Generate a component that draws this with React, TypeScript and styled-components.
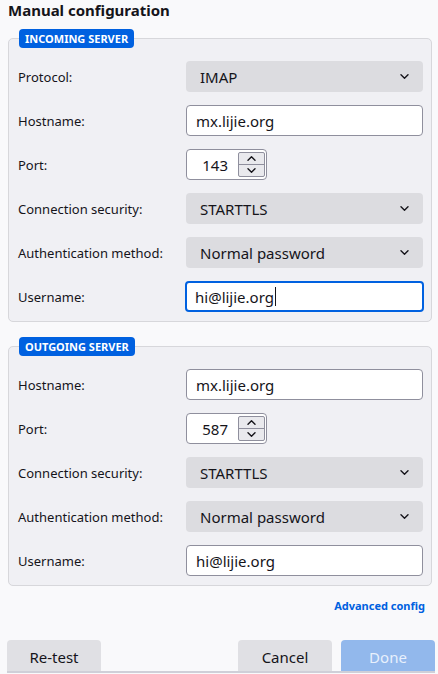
import React from "react";
import styled, { createGlobalStyle } from "styled-components";

const Global = createGlobalStyle`
  html, body { margin: 0; padding: 0; background: #f9f9fb; }
  body { font-family: "Noto Sans", "Liberation Sans", sans-serif; color: #15141a; }
  * { box-sizing: border-box; }
`;

const Page = styled.div`
  width: 438px;
  height: 674px;
  overflow: hidden;
  display: flex;
  flex-direction: column;
  padding: 0 6px 0 8px;
`;

const Title = styled.h1`
  margin: 0;
  font-size: 15px;
  line-height: 20px;
  font-weight: 700;
  height: 20px;
  flex-shrink: 0;
`;

const Fieldset = styled.fieldset<{ $top: number }>`
  margin: ${(p) => p.$top}px 0 0 0;
  border: 1px solid #d7d7db;
  border-radius: 5px;
  background: #f0f0f4;
  padding: 13px 8px 9px 9px;
  min-width: 0;
  flex-shrink: 0;
`;

const Legend = styled.legend`
  padding: 0 6px;
  height: 19px;
  line-height: 19px;
  background: #0061e0;
  color: #fff;
  font-size: 11px;
  font-weight: 700;
  border-radius: 4px;
  margin-left: 1px;
`;

const Rows = styled.div`
  display: grid;
  grid-template-columns: 168px 1fr;
  row-gap: 13px;
  align-items: center;
`;

const Label = styled.label`
  font-size: 13px;
  line-height: 18px;
  color: #15141a;
`;

const SelectBox = styled.div`
  height: 31px;
  border-radius: 4px;
  background: #dcdce0;
  display: flex;
  align-items: center;
  justify-content: space-between;
  padding: 0 14px 0 14px;
  font-size: 15px;
`;

const Chevron = ({ up = false }: { up?: boolean }) => (
  <svg width="9" height="5" viewBox="0 0 9 5" style={{ transform: up ? "rotate(180deg)" : undefined }}>
    <path d="M1 0.8 L4.5 4.2 L8 0.8" fill="none" stroke="#15141a" strokeWidth="1.4" strokeLinecap="round" strokeLinejoin="round" />
  </svg>
);

const TextBox = styled.div<{ $focus?: boolean }>`
  height: 31px;
  border-radius: 4px;
  background: #fff;
  border: ${(p) => (p.$focus ? "2px solid #0061e0" : "1px solid #8f8f9d")};
  display: flex;
  align-items: center;
  padding-left: ${(p) => (p.$focus ? "8px" : "9px")};
  font-size: 15px;
  margin-left: ${(p) => (p.$focus ? "-1px" : "0")};
  margin-right: ${(p) => (p.$focus ? "-1px" : "0")};
`;

const Caret = styled.span`
  display: inline-block;
  width: 1px;
  height: 19px;
  background: #15141a;
  margin-left: 1px;
`;

const PortBox = styled.div`
  width: 81px;
  height: 31px;
  border-radius: 4px;
  background: #fff;
  border: 1px solid #8f8f9d;
  display: flex;
  align-items: center;
  padding: 2px 1px 2px 0;
`;

const PortValue = styled.span`
  flex: 1;
  text-align: right;
  padding-right: 10px;
  font-size: 15px;
`;

const Spinner = styled.div`
  width: 27px;
  height: 100%;
  display: flex;
  flex-direction: column;
  border: 1px solid #8f8f9d;
  border-radius: 2px;
  background: #e9e9ed;
`;

const SpinBtn = styled.div<{ $top?: boolean }>`
  flex: 1;
  display: flex;
  align-items: center;
  justify-content: center;
  border-bottom: ${(p) => (p.$top ? "1px solid #8f8f9d" : "none")};
`;

const LinkRow = styled.div`
  display: flex;
  justify-content: flex-end;
  margin-top: 12px;
  padding-right: 7px;
  flex-shrink: 0;
`;

const Link = styled.a`
  color: #0061e0;
  font-size: 11px;
  font-weight: 700;
  line-height: 16px;
  text-decoration: none;
`;

const Footer = styled.div`
  margin-top: 26px;
  display: flex;
  align-items: flex-end;
  gap: 9px;
  margin-left: -1px;
  margin-right: -3px;
  border-bottom: 2px solid #cfcfd8;
  flex-shrink: 0;
`;

const Btn = styled.button<{ $primary?: boolean }>`
  width: 94px;
  height: 31px;
  border: none;
  border-radius: 4px 4px 0 0;
  font-family: inherit;
  font-size: 15px;
  line-height: 20px;
  padding: 2px 0 0 0;
  background: ${(p) => (p.$primary ? "#92b8ec" : "#e0e0e4")};
  color: ${(p) => (p.$primary ? "#e8f0fc" : "#15141a")};
`;

const Spacer = styled.div`
  flex: 1;
`;

type Row =
  | { kind: "select"; label: string; value: string }
  | { kind: "text"; label: string; value: string; focus?: boolean }
  | { kind: "port"; label: string; value: string };

const Field = ({ row }: { row: Row }) => (
  <>
    <Label>{row.label}</Label>
    {row.kind === "select" && (
      <SelectBox>
        <span>{row.value}</span>
        <Chevron />
      </SelectBox>
    )}
    {row.kind === "text" && (
      <TextBox $focus={row.focus}>
        {row.value}
        {row.focus && <Caret />}
      </TextBox>
    )}
    {row.kind === "port" && (
      <PortBox>
        <PortValue>{row.value}</PortValue>
        <Spinner>
          <SpinBtn $top>
            <Chevron up />
          </SpinBtn>
          <SpinBtn>
            <Chevron />
          </SpinBtn>
        </Spinner>
      </PortBox>
    )}
  </>
);

const incoming: Row[] = [
  { kind: "select", label: "Protocol:", value: "IMAP" },
  { kind: "text", label: "Hostname:", value: "mx.lijie.org" },
  { kind: "port", label: "Port:", value: "143" },
  { kind: "select", label: "Connection security:", value: "STARTTLS" },
  { kind: "select", label: "Authentication method:", value: "Normal password" },
  { kind: "text", label: "Username:", value: "hi@lijie.org", focus: true },
];

const outgoing: Row[] = [
  { kind: "text", label: "Hostname:", value: "mx.lijie.org" },
  { kind: "port", label: "Port:", value: "587" },
  { kind: "select", label: "Connection security:", value: "STARTTLS" },
  { kind: "select", label: "Authentication method:", value: "Normal password" },
  { kind: "text", label: "Username:", value: "hi@lijie.org" },
];

export default function App() {
  return (
    <Page>
      <Global />
      <Title>Manual configuration</Title>
      <Fieldset $top={9}>
        <Legend>INCOMING SERVER</Legend>
        <Rows>
          {incoming.map((r, i) => (
            <Field key={i} row={r} />
          ))}
        </Rows>
      </Fieldset>
      <Fieldset $top={15}>
        <Legend>OUTGOING SERVER</Legend>
        <Rows>
          {outgoing.map((r, i) => (
            <Field key={i} row={r} />
          ))}
        </Rows>
      </Fieldset>
      <LinkRow>
        <Link href="#">Advanced config</Link>
      </LinkRow>
      <Footer>
        <Btn>Re-test</Btn>
        <Spacer />
        <Btn>Cancel</Btn>
        <Btn $primary>Done</Btn>
      </Footer>
    </Page>
  );
}
